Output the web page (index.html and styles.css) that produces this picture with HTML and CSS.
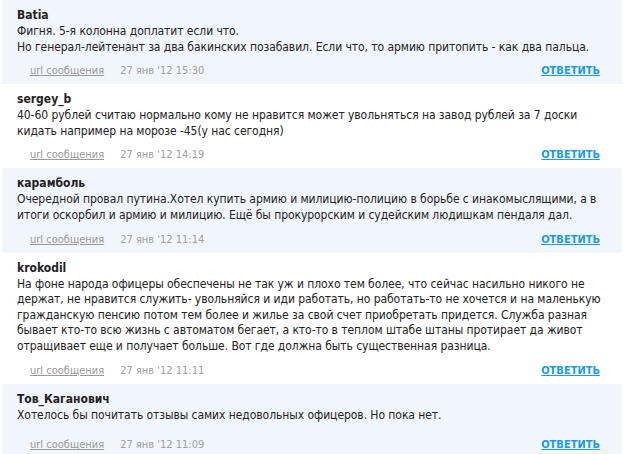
FILE: index.html
```html
<!DOCTYPE html>
<html lang="ru">
<head>
<meta charset="utf-8">
<link rel="stylesheet" href="styles.css">
</head>
<body>
<div class="list">
  <div class="comment alt">
    <div class="author">Batia</div>
    <div class="text">Фигня. 5-я колонна доплатит если что.<br>Но генерал-лейтенант за два бакинских позабавил. Если что, то армию притопить - как два пальца.</div>
    <div class="meta"><a class="url" href="#">url сообщения</a><span class="date">27 янв '12 15:30</span><a class="reply" href="#">ответить</a></div>
  </div>
  <div class="comment">
    <div class="author">sergey_b</div>
    <div class="text">40-60 рублей считаю нормально кому не нравится может увольняться на завод рублей за 7 доски кидать например на морозе -45(у нас сегодня)</div>
    <div class="meta"><a class="url" href="#">url сообщения</a><span class="date">27 янв '12 14:19</span><a class="reply" href="#">ответить</a></div>
  </div>
  <div class="comment alt">
    <div class="author">карамболь</div>
    <div class="text">Очередной провал путина.Хотел купить армию и милицию-полицию в борьбе с инакомыслящими, а в итоги оскорбил и армию и милицию. Ещё бы прокурорским и судейским людишкам пендаля дал.</div>
    <div class="meta"><a class="url" href="#">url сообщения</a><span class="date">27 янв '12 11:14</span><a class="reply" href="#">ответить</a></div>
  </div>
  <div class="comment">
    <div class="author">krokodil</div>
    <div class="text">На фоне народа офицеры обеспечены не так уж и плохо тем более, что сейчас насильно никого не держат, не нравится служить- увольняйся и иди работать, но работать-то не хочется и на маленькую гражданскую пенсию потом тем более и жилье за свой счет приобретать придется. Служба разная бывает кто-то всю жизнь с автоматом бегает, а кто-то в теплом штабе штаны протирает да живот отращивает еще и получает больше. Вот где должна быть существенная разница.</div>
    <div class="meta"><a class="url" href="#">url сообщения</a><span class="date">27 янв '12 11:11</span><a class="reply" href="#">ответить</a></div>
  </div>
  <div class="comment alt last">
    <div class="author">Тов_Каганович</div>
    <div class="text">Хотелось бы почитать отзывы самих недовольных офицеров. Но пока нет.</div>
    <div class="meta"><a class="url" href="#">url сообщения</a><span class="date">27 янв '12 11:09</span><a class="reply" href="#">ответить</a></div>
  </div>
</div>
</body>
</html>
```
FILE: styles.css
```css
html, body {
  margin: 0;
  padding: 0;
  background: #ffffff;
}
body {
  font-family: "DejaVu Sans Condensed", "DejaVu Sans", sans-serif;
  font-size: 12px;
  letter-spacing: -0.06px;
  color: #222222;
}
.list {
  margin: 0 2px 0 2px;
}
.comment {
  padding: 7px 6px 6px 15px;
}
.comment.alt {
  background: #f1f6fd;
}
.comment.last {
  padding-bottom: 14px;
}
.comment.last .meta {
  margin-top: 15px;
}
.author {
  font-weight: bold;
  line-height: 17px;
  letter-spacing: 0;
}
.text {
  line-height: 15.6px;
}
.meta {
  display: flex;
  align-items: baseline;
  margin-top: 9px;
  padding-left: 13px;
  padding-right: 16px;
  font-size: 11px;
  line-height: 14px;
  letter-spacing: 0;
}
.url {
  color: #999999;
  text-decoration: underline;
}
.date {
  color: #a0a0a0;
  margin-left: 16px;
}
.reply {
  margin-left: auto;
  color: #1b9ae0;
  font-weight: bold;
  text-transform: uppercase;
  text-decoration: underline;
}
```
